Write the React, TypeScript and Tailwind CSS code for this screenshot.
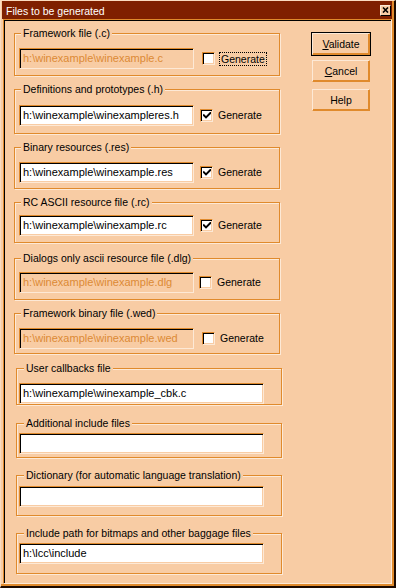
import React from 'react';

type Top = {
  label: string;
  value: string;
  disabled: boolean;
  checked: boolean;
  focus?: boolean;
  mt: string;
  pt: string;
  pb: string;
  cbml: string;
};

const tops: Top[] = [
  { label: 'Framework file (.c)', value: 'h:\\winexample\\winexample.c', disabled: true, checked: false, focus: true, mt: 'mt-[13px]', pt: 'pt-[14px]', pb: 'pb-[6px]', cbml: 'ml-[8px]' },
  { label: 'Definitions and prototypes (.h)', value: 'h:\\winexample\\winexampleres.h', disabled: false, checked: true, mt: 'mt-[13px]', pt: 'pt-[15px]', pb: 'pb-[7px]', cbml: 'ml-[6px]' },
  { label: 'Binary resources (.res)', value: 'h:\\winexample\\winexample.res', disabled: false, checked: true, mt: 'mt-[13px]', pt: 'pt-[14px]', pb: 'pb-[5px]', cbml: 'ml-[6px]' },
  { label: 'RC ASCII resource file (.rc)', value: 'h:\\winexample\\winexample.rc', disabled: false, checked: true, mt: 'mt-[13px]', pt: 'pt-[12px]', pb: 'pb-[6px]', cbml: 'ml-[6px]' },
  { label: 'Dialogs only ascii resource file (.dlg)', value: 'h:\\winexample\\winexample.dlg', disabled: true, checked: false, mt: 'mt-[15px]', pt: 'pt-[13px]', pb: 'pb-[6px]', cbml: 'ml-[5px]' },
  { label: 'Framework binary file (.wed)', value: 'h:\\winexample\\winexample.wed', disabled: true, checked: false, mt: 'mt-[13px]', pt: 'pt-[14px]', pb: 'pb-[4px]', cbml: 'ml-[8px]' },
];

type Bottom = { label: string; value: string; mt: string; pt: string; pb: string };

const bottoms: Bottom[] = [
  { label: 'User callbacks file', value: 'h:\\winexample\\winexample_cbk.c', mt: 'mt-[14px]', pt: 'pt-[14px]', pb: 'pb-0' },
  { label: 'Additional include files', value: '', mt: 'mt-[18px]', pt: 'pt-[9px]', pb: 'pb-[3px]' },
  { label: 'Dictionary (for automatic language translation)', value: '', mt: 'mt-[17px]', pt: 'pt-[10px]', pb: 'pb-[8px]' },
  { label: 'Include path for bitmaps and other baggage files', value: 'h:\\lcc\\include', mt: 'mt-[17px]', pt: 'pt-[9px]', pb: 'pb-[9px]' },
];

function Field({ value, disabled, width }: { value: string; disabled?: boolean; width: string }) {
  return (
    <div
      className={`h-[21px] ${width} shrink-0 flex items-center pl-[3px] border border-t-[#e08a2c] border-l-[#e08a2c] border-r-[#fde9d6] border-b-[#fde9d6] shadow-[inset_1px_1px_0_#000,inset_-1px_-1px_0_#f8cca4] text-[11px] leading-[13px] whitespace-nowrap overflow-hidden ${
        disabled ? 'bg-[#f8cca4] text-[#dc8a35]' : 'bg-white text-black'
      }`}
    >
      {value}
    </div>
  );
}

function Check({ checked }: { checked: boolean }) {
  return (
    <div className="w-[13px] h-[13px] shrink-0 bg-white border border-t-[#e08a2c] border-l-[#e08a2c] border-r-[#fde9d6] border-b-[#fde9d6] shadow-[inset_1px_1px_0_#000,inset_-1px_-1px_0_#f8cca4] flex items-center justify-center">
      {checked && (
        <svg width="8" height="7" viewBox="0 0 8 7" className="block">
          <path d="M0.8 3.2 L3 5.4 L7.3 1" stroke="#000" strokeWidth="1.9" fill="none" strokeLinecap="square" />
        </svg>
      )}
    </div>
  );
}

function Group({
  label,
  className,
  legendLeft,
  children,
}: {
  label: string;
  className: string;
  legendLeft: string;
  children: React.ReactNode;
}) {
  return (
    <div className={`relative w-[266px] border border-[#e08a2c] shadow-[inset_1px_1px_0_#fde9d6,1px_1px_0_#fde9d6] ${className}`}>
      <span className={`absolute top-[-7px] ${legendLeft} px-[2px] bg-[#f8cca4] text-black text-[10.5px] leading-[13px] whitespace-nowrap`}>
        {label}
      </span>
      {children}
    </div>
  );
}

function Btn({ children, def, className }: { children: React.ReactNode; def?: boolean; className?: string }) {
  return (
    <button
      className={`w-[58px] h-[22px] bg-[#f8cca4] text-black text-[10.5px] leading-[13px] border border-t-[#fde9d6] border-l-[#fde9d6] border-r-[#e08a2c] border-b-[#e08a2c] shadow-[inset_-1px_-1px_0_#e08a2c] flex items-center justify-center ${
        def ? 'outline outline-black' : ''
      } ${className ?? ''}`}
    >
      {children}
    </button>
  );
}

export default function App() {
  return (
    <div className="w-[396px] h-[588px] bg-[#f8cca4] border-l border-t border-l-[#fbdcc0] border-t-[#fbdcc0] border-r-2 border-b-2 border-r-[#1c0a00] border-b-[#1c0a00] font-['Liberation_Sans',Arial,sans-serif] text-black overflow-hidden">
      <div className="h-full flex flex-col pl-[1px] border-r-2 border-b-2 border-r-[#e08a2c] border-b-[#e08a2c]">
        <div className="h-[18px] shrink-0 bg-[#7f2000] flex items-center justify-between pl-[4px] pr-[1px]">
          <span className="text-white text-[10.5px] leading-[13px] pt-[2px]">Files to be generated</span>
          <div className="w-[11px] h-[11px] bg-[#f8cca4] border border-t-[#fde9d6] border-l-[#fde9d6] border-r-black border-b-black flex items-center justify-center">
            <svg width="7" height="6" viewBox="0 0 7 6" className="block">
              <path d="M1 0.5 L6 5.5 M6 0.5 L1 5.5" stroke="#000" strokeWidth="1.6" fill="none" />
            </svg>
          </div>
        </div>
        <div className="flex-1 ml-[1px] flex border border-t-[#e08a2c] border-l-[#e08a2c] border-r-[#fde9d6] border-b-[#fde9d6] shadow-[inset_1px_1px_0_#000]">
          <div className="w-[278px] shrink-0 flex flex-col">
            {tops.map((g) => (
              <Group key={g.label} label={g.label} className={`ml-[10px] ${g.mt}`} legendLeft="left-[6px]">
                <div className={`flex items-center pl-[4px] ${g.pt} ${g.pb}`}>
                  <Field value={g.value} disabled={g.disabled} width="w-[175px]" />
                  <div className={g.cbml}>
                    <Check checked={g.checked} />
                  </div>
                  {g.focus ? (
                    <span className="ml-[4px] px-[1px] border border-dotted border-black text-[10.5px] leading-[12px]">Generate</span>
                  ) : (
                    <span className="ml-[5px] text-[10.5px] leading-[13px]">Generate</span>
                  )}
                </div>
              </Group>
            ))}
            {bottoms.map((g) => (
              <Group key={g.label} label={g.label} className={`ml-[12px] ${g.mt}`} legendLeft="left-[7px]">
                <div className={`flex pl-[2px] ${g.pt} ${g.pb}`}>
                  <Field value={g.value} width="w-[245px]" />
                </div>
              </Group>
            ))}
          </div>
          <div className="ml-[30px] pt-[13px] flex flex-col">
            <Btn def>
              <span>
                <span className="underline underline-offset-1">V</span>alidate
              </span>
            </Btn>
            <Btn className="mt-[5px]">
              <span>
                <span className="underline underline-offset-1">C</span>ancel
              </span>
            </Btn>
            <Btn className="mt-[7px]">Help</Btn>
          </div>
        </div>
      </div>
    </div>
  );
}
